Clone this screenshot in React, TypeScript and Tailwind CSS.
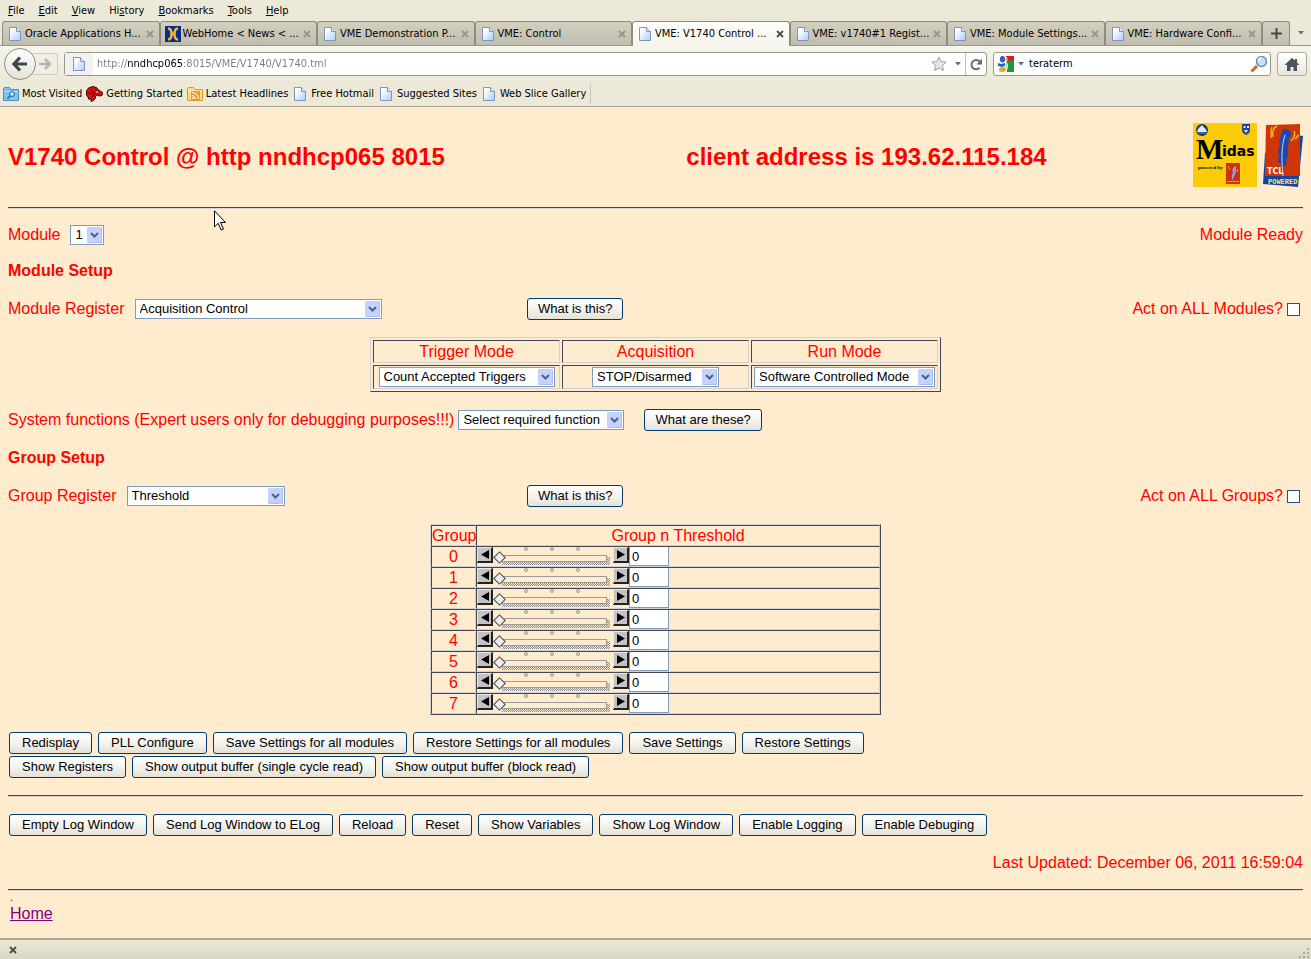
import { useState } from "react";

const TABS = [
  { title: "Oracle Applications H...", icon: "page" },
  { title: "WebHome < News < ...", icon: "twiki" },
  { title: "VME Demonstration P...", icon: "page" },
  { title: "VME: Control", icon: "page" },
  { title: "VME: V1740 Control ...", icon: "page", active: true },
  { title: "VME: v1740#1 Regist...", icon: "page" },
  { title: "VME: Module Settings...", icon: "page" },
  { title: "VME: Hardware Confi...", icon: "page" },
];

const MENUS = ["File", "Edit", "View", "History", "Bookmarks", "Tools", "Help"];
// index of the underlined access key of each menu
const ACCESS_KEYS = [0, 0, 0, 2, 0, 0, 0];

const BOOKMARKS = [
  { title: "Most Visited", icon: "folder" },
  { title: "Getting Started", icon: "mozilla" },
  { title: "Latest Headlines", icon: "feed" },
  { title: "Free Hotmail", icon: "page" },
  { title: "Suggested Sites", icon: "page" },
  { title: "Web Slice Gallery", icon: "page" },
];

const MODES = [
  { label: "Trigger Mode", value: "Count Accepted Triggers", width: "w-[176px]" },
  { label: "Acquisition", value: "STOP/Disarmed", width: "w-[127px]" },
  { label: "Run Mode", value: "Software Controlled Mode", width: "w-[181px]" },
];

const PageIcon = () => (
  <svg width="16" height="16" viewBox="0 0 16 16" className="shrink-0">
    <defs>
      <linearGradient id="sheet" x1="0" y1="0" x2="1" y2="1">
        <stop offset="0.2" stopColor="#fff" />
        <stop offset="1" stopColor="#a9cdfb" />
      </linearGradient>
    </defs>
    <path d="M2.500 1.500h7l4 4v9h-11z" fill="url(#sheet)" stroke="#8592bd" />
    <path d="M9.500 1.500v4h4" fill="#dfeafc" stroke="#8592bd" />
  </svg>
);

const TwikiIcon = () => (
  <svg width="16" height="16" viewBox="0 0 16 16" className="shrink-0">
    <rect width="16" height="16" fill="#0a2c8c" />
    <path d="M3 2.500c3 0 3.500 2.500 3.500 5.500S6 13.500 3 13.500M13 2.500c-3 0-3.500 2.500-3.500 5.500s.5 5.500 3.500 5.500" fill="none" stroke="#f6b928" strokeWidth="2.400" />
    <path d="M6 8h4" stroke="#f6b928" strokeWidth="3" />
  </svg>
);

const FolderIcon = () => (
  <svg width="16" height="16" viewBox="0 0 16 16" className="shrink-0">
    <path d="M.5 14.500v-12l1-1h5l1.500 2h7.500v11z" fill="#7fc1ec" stroke="#4a93c9" />
    <path d="M1.500 5.500h13" stroke="#c5e5fa" />
    <circle cx="9" cy="8" r="2.500" fill="#b9def6" stroke="#1f659e" />
    <path d="M7 10l-2.500 2.500" stroke="#1f659e" strokeWidth="1.500" />
  </svg>
);

const MozillaIcon = () => (
  <svg width="17" height="16" viewBox="0 0 17 16" className="shrink-0">
    <path d="M.5 5l2-3 4-1.500 4 1 2 2.500 4 2.500-.5 3-3 .5-2-1-1.500 1v2l-2 2.500-2.500 1 .5-3-2.500 1-1-2.500L.5 9z" fill="#d41212" stroke="#3a0505" />
    <path d="M5 5l3 1v3l-2 2M9 3l2 2M3 7l3 1" fill="none" stroke="#3a0505" />
    <circle cx="11" cy="6" r="0.800" fill="#fff" />
  </svg>
);

const FeedIcon = () => (
  <svg width="16" height="16" viewBox="0 0 16 16" className="shrink-0">
    <path d="M.5 14.500v-12l1-1h5l1.500 2h7.500v11z" fill="#fbdc80" stroke="#d69a2c" />
    <path d="M1.500 5h13" stroke="#fdf3cb" />
    <rect x="4" y="5" width="9" height="9" fill="#ef9a35" />
    <circle cx="6" cy="12" r="1" fill="#fff" />
    <path d="M5 9.500a3.500 3.500 0 0 1 3.500 3.500M5 6.500a6.500 6.500 0 0 1 6.500 6.500" fill="none" stroke="#fff" />
  </svg>
);

const Icon = ({ name }: { name: string }) => {
  if (name === "twiki") return <TwikiIcon />;
  if (name === "folder") return <FolderIcon />;
  if (name === "mozilla") return <MozillaIcon />;
  if (name === "feed") return <FeedIcon />;
  return <PageIcon />;
};

const CloseIcon = ({ color }: { color: string }) => (
  <svg width="8" height="8" viewBox="0 0 8 8" className="shrink-0">
    <path d="M1 1l6 6M7 1L1 7" stroke={color} strokeWidth="1.800" />
  </svg>
);

const DownArrow = () => (
  <svg width="6" height="4" viewBox="0 0 6 4" className="shrink-0">
    <path d="M0 0h6L3 3.500z" fill="#6b6b6b" />
  </svg>
);

const MidasLogo = () => (
  <svg width="64" height="64" viewBox="0 0 64 64" role="img" aria-label="Midas">
    <rect width="64" height="64" fill="#fbcb08" />
    <circle cx="9" cy="7" r="6" fill="#16386f" />
    <path d="M4 9c1-4 3-5 5-7 1 2 4 3 5 7z" fill="#dfe9f5" />
    <path d="M5 10h8" stroke="#6d8cb8" />
    <path d="M49 1h8v6c0 3-2 4-4 5-2-1-4-2-4-5z" fill="#23459a" />
    <path d="M50.500 3h2v2h-2zM54 3h2v2h-2zM51 7h4l-2 3z" fill="#dfe9f5" />
    <text x="3" y="36" fontFamily="Liberation Serif, serif" fontWeight="bold" fontSize="29">M</text>
    <text x="29" y="33" fontFamily="DejaVu Sans, sans-serif" fontWeight="bold" fontSize="14">idas</text>
    <text x="5" y="46" fontFamily="Liberation Serif, serif" fontWeight="bold" fontSize="5">powered by</text>
    <rect x="33" y="40" width="14" height="21" fill="#cf3010" />
    <path d="M43 43c-4 1-4 5-3 7-2 3-1 5 0 8 0-4 4-7 3-15z" fill="#8ea0dc" />
    <path d="M35 43l2 4M45 46l-1 3" stroke="#e7a91c" />
    <path d="M34.500 58.500h11" stroke="#f3c9b0" strokeDasharray="2 1" />
  </svg>
);

const TclLogo = () => (
  <svg width="40" height="64" viewBox="0 0 40 64" role="img" aria-label="TCL powered">
    <path d="M2 30l-2 31 35 3 5-51-6-1z" fill="#16439f" />
    <path d="M3 2l34-1v52H2z" fill="#d13405" />
    <path d="M25 7c-3-2-6-1-6 2l-3 9 1 2-2 9 1 2-1 8 3 2 1 8c0-4 2-6 5-8l-1-4 2-3v-9l1-9 2-4c1-2 0-4-3-5z" fill="#1c4bb0" />
    <path d="M22 12c-3 10-4 20-2 41" fill="none" stroke="#c9d5ee" />
    <path d="M9 4c-2 4 0 8-1 11M14 3c-4 2-5 5-4 11M31 8c2 4 0 7-3 10M36 12c-2 1-2 3-4 4" fill="none" stroke="#f3b51b" strokeWidth="1.500" />
    <text x="4" y="51" fontFamily="DejaVu Sans, sans-serif" fontSize="8" fill="#fff">TCL</text>
    <text x="5" y="61" fontFamily="Liberation Mono, monospace" fontWeight="bold" fontSize="7" fill="#f8f23c">POWERED</text>
  </svg>
);

const Button = ({ children, wide }: { children: string; wide?: boolean }) => (
  <button
    className={
      wide
        ? "h-[22px] shrink-0 whitespace-nowrap rounded-[3px] border border-[#003c74] bg-linear-to-b from-white via-[#f4f3ee] to-[#e4e1d6] px-3 text-[13px] leading-5 text-black"
        : "h-[22px] shrink-0 whitespace-nowrap rounded-[3px] border border-[#003c74] bg-linear-to-b from-white via-[#f4f3ee] to-[#e4e1d6] px-[10px] text-[13px] leading-5 text-black"
    }
  >
    {children}
  </button>
);

const ButtonRow = ({ labels }: { labels: string[] }) => (
  <div className="flex h-6 items-center gap-[6px] pl-px">
    {labels.map((label) => (
      <Button key={label} wide>{label}</Button>
    ))}
  </div>
);

const Select = ({ id, label, value, width }: { id: string; label?: string; value: string; width: string }) => (
  <span className={`relative inline-block h-5 align-top ${width}`}>
    <select
      id={id}
      aria-label={label}
      defaultValue={value}
      className="block h-5 w-full appearance-none border border-[#7f9db9] bg-white pl-1 text-[13px] leading-[18px] text-black"
    >
      <option>{value}</option>
    </select>
    <svg width="15" height="16" viewBox="0 0 15 16" className="pointer-events-none absolute right-[2px] top-[2px]">
      <rect width="15" height="16" rx="1" fill="#c3d3fd" />
      <path d="M14.500 1v14.500H1" fill="none" stroke="#aabff2" />
      <path d="M4 6l3.500 3.500L11 6" fill="none" stroke="#4d6185" strokeWidth="2" />
    </svg>
  </span>
);

const Rule = () => <hr className="mt-4 border-0 border-t border-b border-t-[#424652] border-b-[#d9d6d4]" />;

const StepButton = ({ dir, onClick, label }: { dir: "left" | "right"; onClick: () => void; label: string }) => (
  <button
    aria-label={label}
    onClick={onClick}
    className="size-4 shrink-0 border-t border-l border-r-2 border-b-2 border-t-[#e8e8e8] border-l-[#e8e8e8] border-r-[#222] border-b-[#222] bg-[#c3c3c3]"
  >
    <svg width="13" height="13" viewBox="0 0 13 13">
      <path d={dir === "left" ? "M11 2v9L3 6.500z" : "M3 2v9l8-4.500z"} fill="#000" />
    </svg>
  </button>
);

const GroupRow = ({ group }: { group: number }) => {
  const [value, setValue] = useState(0);

  return (
    <tr className="h-[21px]">
      <td className="border border-t-[#424652] border-l-[#424652] border-r-[#d0d0d8] border-b-[#d0d0d8] text-center">{group}</td>
      <td className="border border-t-[#424652] border-l-[#424652] border-r-[#d0d0d8] border-b-[#d0d0d8]">
        <div className="flex h-[19px]">
          <StepButton dir="left" label={`Decrease threshold ${group}`} onClick={() => setValue(Math.max(0, value - 1))} />
          <div className="relative w-[120px] shrink-0">
            <svg width="120" height="19" viewBox="0 0 120 19" className="absolute left-0 top-0">
              <defs>
                <pattern id="hatch" width="2" height="2" patternUnits="userSpaceOnUse">
                  <path d="M0 0h1v1H0zM1 1h1v1H1z" fill="#8a8a8a" />
                </pattern>
              </defs>
              <path d="M9 15h105v-5h3v8H9z" fill="url(#hatch)" />
              <rect x="6.500" y="8.500" width="107" height="6" fill="#ffebcd" stroke="#9a9a9a" />
              <g fill="#e8e4dc" stroke="#9a9a9a">
                <circle cx="33" cy="2" r="1.500" />
                <circle cx="59" cy="2" r="1.500" />
                <circle cx="85" cy="2" r="1.500" />
              </g>
            </svg>
            <input
              type="range"
              min={0}
              max={4095}
              value={value}
              aria-label={`Threshold ${group}`}
              onChange={(e) => setValue(Number(e.target.value))}
              className="absolute left-[2px] top-[2px] h-[17px] w-[113px] appearance-none bg-transparent [&::-webkit-slider-thumb]:size-[9px] [&::-webkit-slider-thumb]:rotate-45 [&::-webkit-slider-thumb]:appearance-none [&::-webkit-slider-thumb]:border [&::-webkit-slider-thumb]:border-[#444] [&::-webkit-slider-thumb]:bg-[#eeeeee]"
            />
          </div>
          <StepButton dir="right" label={`Increase threshold ${group}`} onClick={() => setValue(Math.min(4095, value + 1))} />
          <input
            type="text"
            value={value}
            aria-label={`Threshold value ${group}`}
            onChange={(e) => setValue(Number(e.target.value) || 0)}
            className="h-[19px] w-10 border border-t-0 border-[#7f9db9] bg-white px-[2px] text-[13px] text-black"
          />
        </div>
      </td>
    </tr>
  );
};

const BrowserChrome = () => (
  <header className="shrink-0 border-b border-[#aca899] bg-[#ece9d8] font-['DejaVu_Sans_Condensed','Noto_Sans',sans-serif] text-[11px] text-black">
    <nav className="flex h-[21px] items-center gap-[14px] pl-2">
      {MENUS.map((menu, i) => (
        <button key={menu}>
          {menu.slice(0, ACCESS_KEYS[i])}
          <u>{menu[ACCESS_KEYS[i]]}</u>
          {menu.slice(ACCESS_KEYS[i] + 1)}
        </button>
      ))}
    </nav>

    <div className="flex h-[25px] border-b border-[#9b9889] pl-[2px]">
      {TABS.map((tab) => (
        <button
          key={tab.title}
          className={
            tab.active
              ? "-mb-px flex min-w-0 flex-1 items-center gap-[2px] rounded-t-[3px] border border-b-0 border-[#8f8c7e] bg-linear-to-b from-[#fdfdfa] to-[#f6f4ec] pl-1 pr-[5px]"
              : "flex min-w-0 flex-1 items-center gap-[2px] rounded-t-[3px] border border-b-0 border-[#8f8c7e] bg-linear-to-b from-[#d3d0c0] to-[#bfbdad] pl-1 pr-[5px]"
          }
        >
          <Icon name={tab.icon} />
          <span className="min-w-0 flex-1 whitespace-nowrap text-left">{tab.title}</span>
          <CloseIcon color={tab.active ? "#4c4c4c" : "#989688"} />
        </button>
      ))}
      <button aria-label="New tab" className="flex w-7 items-center justify-center rounded-t-[3px] border border-b-0 border-[#8f8c7e] bg-linear-to-b from-[#d3d0c0] to-[#bfbdad]">
        <svg width="11" height="11" viewBox="0 0 11 11">
          <path d="M5.500 0v11M0 5.500h11" stroke="#3f4a50" strokeWidth="2" />
        </svg>
      </button>
      <button aria-label="List all tabs" className="flex w-[21px] items-center justify-center">
        <DownArrow />
      </button>
    </div>

    <div className="flex h-9 items-center bg-linear-to-b from-[#f6f4ec] to-[#ece9d8] px-1">
      <button aria-label="Back" className="z-10 flex size-8 shrink-0 items-center justify-center rounded-full border border-[#8f8c7e] bg-linear-to-b from-white to-[#e6e3d6]">
        <svg width="16" height="16" viewBox="0 0 16 16">
          <path d="M8 1.500L2 8l6 6.500M2.500 8H15" fill="none" stroke="#39464e" strokeWidth="3.200" />
        </svg>
      </button>
      <button aria-label="Forward" className="-ml-1 mr-[6px] flex h-[22px] w-[26px] shrink-0 items-center justify-center rounded-r-[3px] border border-l-0 border-[#d0cdbf] bg-[#f1efe5]">
        <svg width="12" height="12" viewBox="0 0 12 12">
          <path d="M6 1l5 5-5 5M10.500 6H0" fill="none" stroke="#b3b5b0" strokeWidth="2.600" />
        </svg>
      </button>
      <div className="flex h-6 flex-1 items-center rounded-[3px] border border-[#9b9889] bg-white">
        <span className="flex h-full w-7 items-center justify-center bg-[#f1f1f1]">
          <PageIcon />
        </span>
        <input
          type="text"
          aria-label="Address"
          defaultValue="http://nndhcp065:8015/VME/V1740/V1740.tml"
          className="min-w-0 flex-1 bg-[linear-gradient(90deg,#7b7b7b_34px,#000_34px,#000_90px,#7b7b7b_90px)] bg-clip-text px-1 text-transparent"
        />
        <svg width="16" height="16" viewBox="0 0 16 16" className="mr-2">
          <path d="M8 1l2.100 4.600 5 .5-3.700 3.400 1 5L8 12l-4.400 2.500 1-5L.9 6.100l5-.5z" fill="#e5e5e5" stroke="#a0a0a0" />
        </svg>
        <DownArrow />
        <button aria-label="Reload page" className="ml-1 flex h-full w-[21px] items-center justify-center border-l border-[#c0beb2]">
          <svg width="13" height="13" viewBox="0 0 13 13">
            <path d="M9.500 9.800A4.600 4.600 0 1 1 9.500 3.500" fill="none" stroke="#676c70" strokeWidth="2" />
            <path d="M12 .5v6H6.500z" fill="#676c70" />
          </svg>
        </button>
      </div>
      <div className="ml-[6px] flex h-6 w-[278px] items-center rounded-[3px] border border-[#9b9889] bg-white pl-1 pr-[2px]">
        <svg width="16" height="16" viewBox="0 0 16 16" className="mr-1">
          <rect x="8" width="8" height="5" fill="#dc1c1c" />
          <path d="M8 5l8-1v12H9z" fill="#179a3d" />
          <ellipse cx="4.500" cy="3.200" rx="2.600" ry="3.200" fill="#2d61c5" />
          <path d="M0 7l3 1 4-1v3l-3 1-4-1z" fill="#2d61c5" />
          <ellipse cx="4.500" cy="13.500" rx="3.500" ry="2.500" fill="#f0a616" />
          <path d="M8 1c1.500 1 1.500 3 0 5 2 2 2 6 0 9" fill="none" stroke="#fff" />
        </svg>
        <DownArrow />
        <input type="text" aria-label="Search" defaultValue="teraterm" className="min-w-0 flex-1 px-[5px]" />
        <svg width="18" height="18" viewBox="0 0 18 18">
          <path d="M7 11l-5.500 5.500" stroke="#c56e28" strokeWidth="3" />
          <circle cx="11.500" cy="6.500" r="5" fill="#bfe3fb" stroke="#7089ad" strokeWidth="1.500" />
          <path d="M8.500 6a3 3 0 0 1 3-3" fill="none" stroke="#fff" strokeWidth="1.500" />
        </svg>
      </div>
      <button aria-label="Home page" className="ml-[6px] flex h-6 w-[30px] items-center justify-center rounded-[3px] border border-[#aeab9d] bg-linear-to-b from-white to-[#e9e6da]">
        <svg width="16" height="15" viewBox="0 0 16 15">
          <path d="M8 1L.5 8H3v6h3.500v-4h3v4H13V8h2.500L13 5.500V2h-2v1.500z" fill="#4a545d" />
        </svg>
      </button>
    </div>

    <div className="flex h-6 items-center gap-1 pl-[3px]">
      {BOOKMARKS.map((b) => (
        <a key={b.title} href="#" className="flex items-center gap-[3px] whitespace-nowrap">
          <Icon name={b.icon} />
          {b.title}
        </a>
      ))}
      <span className="h-5 border-l border-[#c9c5b2]" />
    </div>
  </header>
);

const App = () => {
  return (
    <div className="flex min-h-screen flex-col bg-[#ffebcd] font-['Liberation_Sans',Arial,sans-serif] text-base leading-5 text-[#ff0000]">
      <BrowserChrome />

      <main className="relative flex-1 px-2">
        <div className="mt-4 grid grid-cols-[11fr_10fr] items-center text-2xl font-bold">
          <h1 className="pt-1">V1740 Control @ http nndhcp065 8015</h1>
          <div className="flex items-center justify-between">
            <h2 className="pt-1">client address is 193.62.115.184</h2>
            <div className="flex gap-[6px]">
              <MidasLogo />
              <TclLogo />
            </div>
          </div>
        </div>
        <div className="h-1" />
        <Rule />

        <div className="mt-4 flex h-5 items-center justify-between">
          <div className="flex gap-[10px]">
            <label htmlFor="module">Module</label>
            <Select id="module" value="1" width="w-[34px]" />
          </div>
          <span>Module Ready</span>
        </div>

        <h3 className="mt-4 font-bold">Module Setup</h3>

        <div className="mt-4 grid h-6 grid-cols-[40%_1fr_auto] items-center">
          <div className="flex gap-[10px]">
            <label htmlFor="module-register">Module Register</label>
            <Select id="module-register" value="Acquisition Control" width="w-[247px]" />
          </div>
          <div className="flex pl-px">
            <Button>What is this?</Button>
          </div>
          <label className="flex items-center gap-1 pr-[3px]">
            Act on ALL Modules?
            <input type="checkbox" className="size-[13px] appearance-none border border-[#1c5180] bg-white" />
          </label>
        </div>

        {/* acquisition control register */}
        <table className="mx-auto mt-4 h-[55px] w-[571px] table-fixed border-separate border-spacing-[2px] border border-t-[#d0d0d8] border-l-[#d0d0d8] border-r-[#424652] border-b-[#424652]">
          <thead>
            <tr>
              {MODES.map((m) => (
                <th key={m.label} className="h-[23px] border border-t-[#424652] border-l-[#424652] border-r-[#d0d0d8] border-b-[#d0d0d8] p-0 font-normal">
                  {m.label}
                </th>
              ))}
            </tr>
          </thead>
          <tbody>
            <tr>
              {MODES.map((m) => (
                <td key={m.label} className="h-6 border border-t-[#424652] border-l-[#424652] border-r-[#d0d0d8] border-b-[#d0d0d8] p-0 text-center">
                  <Select id={m.label} label={m.label} value={m.value} width={m.width} />
                </td>
              ))}
            </tr>
          </tbody>
        </table>

        <div className="mt-4 flex h-6 items-center gap-1">
          <label htmlFor="system-function">System functions (Expert users only for debugging purposes!!!)</label>
          <Select id="system-function" value="Select required function" width="w-[166px]" />
          <div className="flex pl-4">
            <Button>What are these?</Button>
          </div>
        </div>

        <h3 className="mt-4 font-bold">Group Setup</h3>

        <div className="mt-4 grid h-6 grid-cols-[40%_1fr_auto] items-center">
          <div className="flex gap-[10px]">
            <label htmlFor="group-register">Group Register</label>
            <Select id="group-register" value="Threshold" width="w-[158px]" />
          </div>
          <div className="flex pl-px">
            <Button>What is this?</Button>
          </div>
          <label className="flex items-center gap-1 pr-[3px]">
            Act on ALL Groups?
            <input type="checkbox" className="size-[13px] appearance-none border border-[#1c5180] bg-white" />
          </label>
        </div>

        {/* one threshold per group of channels */}
        <table className="mx-auto mt-4 w-[451px] table-fixed border-separate border-spacing-0 border border-t-[#d0d0d8] border-l-[#d0d0d8] border-r-[#424652] border-b-[#424652] leading-[19px]">
          <thead>
            <tr className="h-[21px]">
              <th className="w-[45px] border border-t-[#424652] border-l-[#424652] border-r-[#d0d0d8] border-b-[#d0d0d8] p-0 font-normal">Group</th>
              <th className="border border-t-[#424652] border-l-[#424652] border-r-[#d0d0d8] border-b-[#d0d0d8] p-0 font-normal">Group n Threshold</th>
            </tr>
          </thead>
          <tbody>
            {[0, 1, 2, 3, 4, 5, 6, 7].map((group) => (
              <GroupRow key={group} group={group} />
            ))}
          </tbody>
        </table>

        <div className="mt-4">
          <ButtonRow
            labels={[
              "Redisplay",
              "PLL Configure",
              "Save Settings for all modules",
              "Restore Settings for all modules",
              "Save Settings",
              "Restore Settings",
            ]}
          />
          <ButtonRow labels={["Show Registers", "Show output buffer (single cycle read)", "Show output buffer (block read)"]} />
        </div>

        <Rule />

        <div className="mt-4">
          <ButtonRow
            labels={[
              "Empty Log Window",
              "Send Log Window to ELog",
              "Reload",
              "Reset",
              "Show Variables",
              "Show Log Window",
              "Enable Logging",
              "Enable Debuging",
            ]}
          />
        </div>

        <p className="mt-4 text-right">Last Updated: December 06, 2011 16:59:04</p>

        <Rule />
        <div className="px-[2px] pb-3">
          <p className="h-[13px] text-[10px] leading-[13px] text-black">.</p>
          <a href="#" className="text-[#800080] underline">Home</a>
        </div>

        {/* mouse pointer */}
        <svg width="13" height="21" viewBox="0 0 13 21" className="pointer-events-none absolute left-[214px] top-[103px]">
          <path d="M.5.8v16l3.700-3.500 3 6.700 2.300-1-3-6.500h5z" fill="#fff" stroke="#000" />
        </svg>
      </main>

      <footer className="flex h-[21px] shrink-0 items-center justify-between border-t-2 border-[#aca899] bg-linear-to-b from-[#ece9d8] to-[#d9d6c4] pl-[9px]">
        <button aria-label="Close add-on bar" className="flex">
          <CloseIcon color="#4c4c4c" />
        </button>
        <svg width="12" height="12" viewBox="0 0 12 12" className="self-end">
          <path d="M8 1h2v2H8zM8 5h2v2H8zM4 5h2v2H4zM8 9h2v2H8zM4 9h2v2H4zM0 9h2v2H0z" fill="#b0ad9c" />
        </svg>
      </footer>
    </div>
  );
};

export default App;
